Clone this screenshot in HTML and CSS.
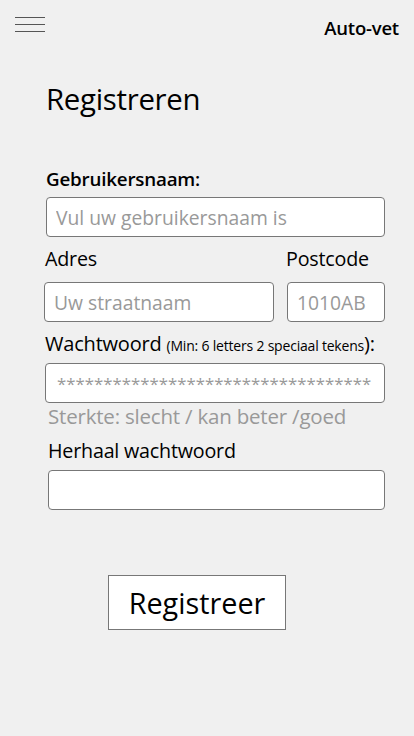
FILE: index.html
```html
<!DOCTYPE html>
<html lang="nl">
<head>
<meta charset="utf-8">
<link rel="stylesheet" href="styles.css">
</head>
<body>
<header class="topbar">
  <div class="hamburger"><span></span><span></span><span></span></div>
  <div class="brand">Auto-vet</div>
</header>
<main class="page">
  <h1 class="title">Registreren</h1>
  <form class="form">
    <label class="lbl lbl-strong">Gebruikersnaam:</label>
    <input class="field f-user" type="text" placeholder="Vul uw gebruikersnaam is">
    <div class="row">
      <div class="col col-adres">
        <label class="lbl">Adres</label>
        <input class="field" type="text" placeholder="Uw straatnaam">
      </div>
      <div class="col col-post">
        <label class="lbl">Postcode</label>
        <input class="field" type="text" placeholder="1010AB">
      </div>
    </div>
    <label class="lbl lbl-pw">Wachtwoord <small>(Min: 6 letters 2 speciaal tekens</small>):</label>
    <input class="field f-pw" type="text" placeholder="**********************************">
    <div class="hint">Sterkte: slecht / kan beter /goed</div>
    <label class="lbl lbl-rep">Herhaal wachtwoord</label>
    <input class="field f-rep" type="text">
    <div class="actions"><button type="button" class="btn">Registreer</button></div>
  </form>
</main>
</body>
</html>
```
FILE: styles.css
```css
* { box-sizing: border-box; }
html, body { margin: 0; padding: 0; }
body {
  background: #f0f0f0;
  font-family: "Open Sans", "Noto Sans", sans-serif;
  color: #000;
  width: 414px;
  height: 736px;
  overflow: hidden;
}
.topbar {
  display: flex;
  justify-content: space-between;
  align-items: flex-start;
  padding: 17px 15px 0 15px;
  height: 60px;
}
.hamburger {
  display: flex;
  flex-direction: column;
  gap: 6px;
  width: 30px;
}
.hamburger span {
  display: block;
  height: 1px;
  background: #555;
}
.brand {
  font-size: 18.5px;
  font-weight: 600;
  letter-spacing: -0.2px;
  margin-top: 1px;
  line-height: 20px;
}
.page { padding: 0 29px 0 44px; }
.title {
  margin: 19px 0 0 2px;
  font-size: 29.4px;
  font-weight: 400;
  line-height: 40px;
  letter-spacing: -0.3px;
}
.form { display: flex; flex-direction: column; margin-top: 48px; }
.lbl {
  display: block;
  font-size: 19.7px;
  line-height: 24px;
  letter-spacing: -0.2px;
}
.lbl-strong { font-weight: 600; margin-left: 2px; font-size: 18.8px; }
.field {
  display: block;
  height: 40px;
  border: 1px solid #777;
  border-radius: 4px;
  background: #fff;
  font-family: inherit;
  font-size: 19.3px;
  padding: 0 9px;
  color: #000;
  outline: none;
}
.field::placeholder { color: #999; }
.f-user { width: 339px; margin-left: 2px; margin-top: 6px; }
.row { display: flex; gap: 13px; margin-top: 10px; }
.col { display: flex; flex-direction: column; gap: 11px; }
.col-adres { width: 230px; }
.col-adres .lbl { margin-left: 1px; }
.col-post { width: 98px; }
.col-post .lbl { margin-left: -1px; }
.lbl-pw { margin-top: 10px; margin-left: 1px; font-size: 20px; height: 24px; }
.lbl-pw small { font-size: 14px; letter-spacing: -0.2px; line-height: 1; }
.f-pw { width: 340px; margin-left: 1px; margin-top: 7px; font-size: 16.8px; padding-left: 11px; }
.hint { color: #999; font-size: 20.5px; line-height: 24px; margin-left: 4px; margin-top: 1px; letter-spacing: -0.2px; }
.lbl-rep { margin-left: 4px; margin-top: 11px; }
.f-rep { width: 337px; margin-left: 4px; margin-top: 7px; }
.actions { margin-top: 65px; padding-left: 64px; }
.btn {
  width: 178px;
  height: 55px;
  background: #fff;
  border: 1px solid #777;
  border-radius: 0;
  font-family: inherit;
  font-size: 28.8px;
  color: #000;
  padding: 0;
}
```
